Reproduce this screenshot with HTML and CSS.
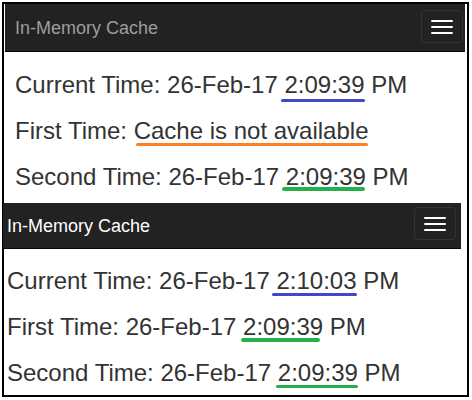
FILE: index.html
```html
<!DOCTYPE html>
<html>
<head>
<meta charset="utf-8">
<link rel="stylesheet" href="styles.css">
</head>
<body>
<div class="frame">
  <section class="shot shot-one">
    <nav class="navbar">
      <span class="brand">In-Memory Cache</span>
      <button class="toggle" type="button"><span class="bar"></span><span class="bar"></span><span class="bar"></span></button>
    </nav>
    <div class="lines">
      <p class="line">Current Time: 26-Feb-17 <span class="mark blue m1">2:09:39</span> PM</p>
      <p class="line">First Time: <span class="mark orange m2">Cache is not available</span></p>
      <p class="line">Second Time: 26-Feb-17 <span class="mark green m3">2:09:39</span> PM</p>
    </div>
  </section>
  <section class="shot shot-two">
    <nav class="navbar">
      <span class="brand">In-Memory Cache</span>
      <button class="toggle" type="button"><span class="bar"></span><span class="bar"></span><span class="bar"></span></button>
    </nav>
    <div class="lines">
      <p class="line">Current Time: 26-Feb-17 <span class="mark blue m4">2:10:03</span> PM</p>
      <p class="line">First Time: 26-Feb-17 <span class="mark green m5">2:09:39</span> PM</p>
      <p class="line">Second Time: 26-Feb-17 <span class="mark green m6">2:09:39</span> PM</p>
    </div>
  </section>
</div>
</body>
</html>
```

FILE: styles.css
```css
* { box-sizing: border-box; }
html, body { margin: 0; padding: 0; background: #fff; }
body { font-family: "Liberation Sans", Arial, sans-serif; color: #333; }

.frame {
  margin: 2px 0 0 2px;
  width: 467px;
  height: 395px;
  border: 2px solid #000;
}

.navbar {
  display: flex;
  align-items: center;
  background: #222;
  border-bottom: 1px solid #080808;
}
.shot-one .navbar { margin-left: 1px; width: 460px; height: 48px; }
.shot-two .navbar { margin-left: -1px; width: 458px; height: 46px; margin-top: 3px; }

.brand { font-size: 18px; line-height: 20px; }
.shot-one .brand { color: #9d9d9d; padding-left: 10px; }
.shot-two .brand { color: #fff; padding-left: 4px; }

.toggle {
  margin-left: auto;
  align-self: flex-start;
  width: 42px;
  height: 33px;
  padding: 0 9px;
  background: transparent;
  border: 1px solid #333;
  border-radius: 4px;
  display: flex;
  flex-direction: column;
  justify-content: center;
  align-items: center;
  gap: 4px;
}
.shot-one .toggle { margin-top: 6px; margin-right: 2px; }
.shot-two .toggle { margin-top: 4px; margin-right: 5px; }
.bar { display: block; width: 22px; height: 2px; background: #fff; border-radius: 1px; }

.lines { font-size: 24px; }
.shot-one .lines { padding: 10px 0 0 11px; }
.shot-two .lines { padding: 9px 0 0 3px; }
.line { margin: 0; line-height: 46px; white-space: nowrap; }

.mark { position: relative; }
.mark::after {
  content: "";
  position: absolute;
  height: 3px;
  border-radius: 2px;
}
.blue::after { background: #3f48cc; }
.orange::after { background: #ff7f27; }
.green::after { background: #22b14c; }

.m1::after { left: -3px; right: 0; top: calc(100% + 1px); }
.m2::after { left: 2px; right: 0; top: calc(100% - 1px); }
.m3::after { left: -4px; right: 1px; top: calc(100% - 3px); height: 4px; }
.m4::after { left: -4px; right: 0; top: calc(100% - 1px); }
.m5::after { left: -2px; right: 3px; top: calc(100% - 2px); height: 4px; }
.m6::after { left: -2px; right: 0; top: calc(100% - 1px); }
```
